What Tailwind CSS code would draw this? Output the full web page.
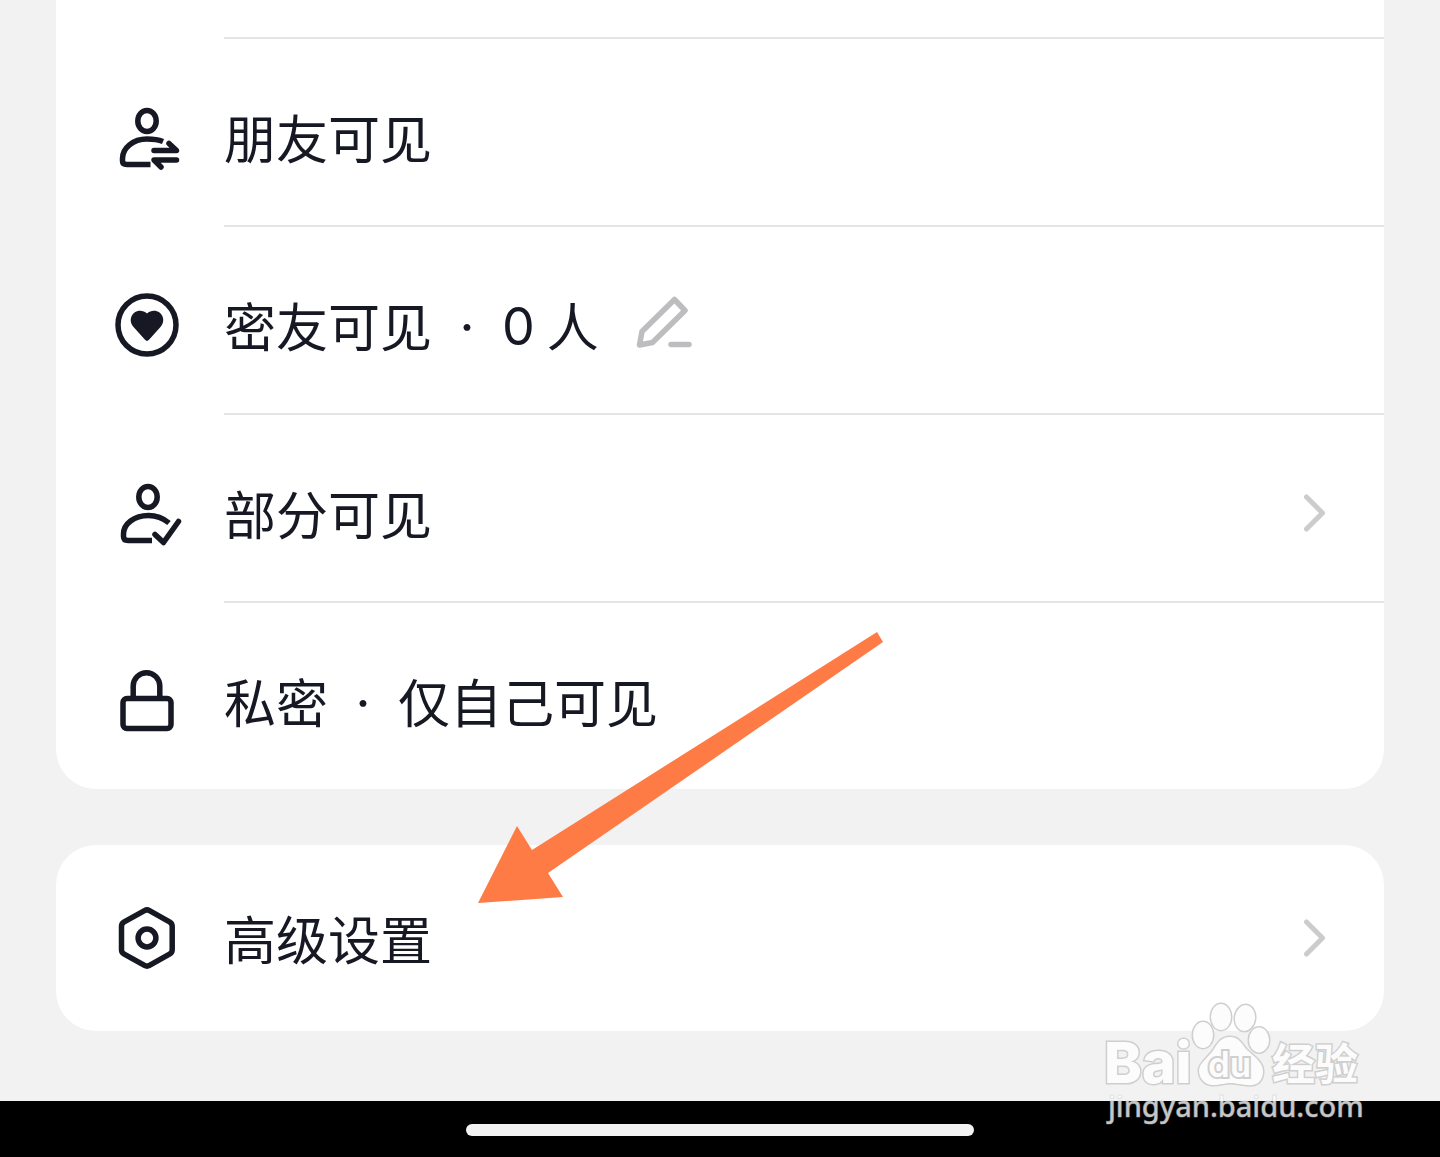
<!DOCTYPE html>
<html lang="zh-CN">
  <head>
    <meta charset="UTF-8" />
    <meta name="viewport" content="width=device-width, initial-scale=1.0" />
    <title>谁可以看</title>
    <script src="https://cdn.jsdelivr.net/npm/@tailwindcss/browser@4"></script>
  </head>
  <body class="relative flex min-h-screen flex-col overflow-x-hidden bg-[#f2f2f2] font-['Inter','Noto_Sans_CJK_SC',sans-serif] text-[52px] leading-[60px] text-[#161823]">
    <main class="flex flex-col gap-14 px-14 pb-[70px]">
      <!-- Visibility options -->
      <section class="rounded-b-[40px] bg-white">
        <div class="ml-42 h-[39px] border-b-2 border-[#e5e5e6]"></div>

        <button type="button" class="flex w-full text-left">
          <span class="flex w-42 items-center pt-2.5 pl-15">
            <svg class="size-16 overflow-visible" viewBox="0 0 64 64" fill="none" stroke="currentColor" stroke-width="5.500" stroke-linecap="round" stroke-linejoin="round" aria-hidden="true">
              <ellipse cx="31" cy="15" rx="9.2" ry="10.6" />
              <path stroke-linecap="butt" d="M47 35.500C42 33.500 37 33 31 33 17 33 6.500 42 6.500 52.500V55Q6.500 58.500 11 58.500H34.500" />
              <path d="M38 44.500H60.500L53 37.500M60.500 54H38L45 61" />
            </svg>
          </span>
          <span class="flex h-[188px] flex-1 items-center border-b-2 border-[#e5e5e6] pt-2.5"><span class="pt-2">朋友可见</span></span>
        </button>

        <div class="flex w-full">
          <span class="flex w-42 items-center pt-2.5 pl-15">
            <svg class="size-16 overflow-visible" viewBox="0 0 64 64" fill="none" stroke="currentColor" stroke-width="5.500" aria-hidden="true">
              <circle cx="31" cy="31" r="29" />
              <path fill="currentColor" stroke="none" d="M31 19.500C27.500 16 22 15.800 18.500 18.500 13.800 22.200 13.600 28.500 17.300 32.800L29 45.800Q31 48 33 45.800L44.700 32.800C48.400 28.500 48.200 22.200 43.500 18.500 40 15.800 34.500 16 31 19.500Z" />
            </svg>
          </span>
          <div class="flex h-[188px] flex-1 items-center border-b-2 border-[#e5e5e6] pt-2.5">
            <button type="button" class="flex items-center"><span class="pt-2">密友可见</span><span class="w-[70px] pt-1 text-center">·</span><span class="pt-1">0</span><span class="ml-3 pt-2">人</span></button>
            <button type="button" class="ml-9 text-[#bdbdbf]" aria-label="编辑密友">
              <svg class="size-14 overflow-visible" viewBox="0 0 56 56" fill="none" stroke="currentColor" stroke-width="5.500" stroke-linecap="round" stroke-linejoin="round">
                <path d="M39.500 2.500L50 13.500 17.500 45.500 4.500 48 7 34.500ZM36 47.500H54" />
              </svg>
            </button>
          </div>
        </div>

        <button type="button" class="flex w-full text-left">
          <span class="flex w-42 items-center pt-2.5 pl-15">
            <svg class="size-16 overflow-visible" viewBox="0 0 64 64" fill="none" stroke="currentColor" stroke-width="5.500" stroke-linecap="round" stroke-linejoin="round" aria-hidden="true">
              <ellipse cx="32" cy="15" rx="9.200" ry="10.600" />
              <path stroke-linecap="butt" d="M53 41C47 36 40 33.500 32.500 33.500 18 33.500 7.500 42 7.500 52V54.500Q7.500 58.500 12 58.500H36" />
              <path d="M39 52.500L47.500 60.500 62.500 39.500" />
            </svg>
          </span>
          <span class="flex h-[188px] flex-1 items-center justify-between border-b-2 border-[#e5e5e6] pt-2.5 pr-14">
            <span class="pt-2">部分可见</span>
            <svg class="h-10 w-6" viewBox="0 0 24 40" fill="none" stroke="#cccccc" stroke-width="5" stroke-linecap="round" stroke-linejoin="round" aria-hidden="true"><path d="M2.500 4L18.500 20 2.500 36" /></svg>
          </span>
        </button>

        <button type="button" class="flex w-full text-left">
          <span class="flex w-42 items-center pt-2.5 pl-15">
            <svg class="size-16 overflow-visible" viewBox="0 0 64 64" fill="none" stroke="currentColor" stroke-width="5.500" aria-hidden="true">
              <rect x="7" y="29.500" width="48" height="30" rx="4" />
              <path d="M17.200 29V17a13.300 13.300 0 0 1 26.600 0V29" />
            </svg>
          </span>
          <span class="flex h-[186px] flex-1 items-center pt-2.5"><span class="pt-2">私密</span><span class="w-[70px] pt-1 text-center">·</span><span class="pt-2">仅自己可见</span></span>
        </button>
      </section>

      <!-- Advanced settings -->
      <section class="rounded-[40px] bg-white">
        <button type="button" class="flex w-full text-left">
          <span class="flex w-42 items-center pl-15">
            <svg class="size-16 overflow-visible" viewBox="0 0 64 64" fill="none" stroke="currentColor" stroke-width="5.500" stroke-linejoin="round" aria-hidden="true">
              <path d="M28.500 4.600Q31 3.200 33.500 4.600L53.500 15.800Q56.200 17.300 56.200 20.300V43.700Q56.200 46.700 53.500 48.200L33.500 59.400Q31 60.800 28.500 59.400L8.200 48.200Q5.500 46.700 5.500 43.700V20.300Q5.500 17.300 8.200 15.800Z" />
              <circle cx="31" cy="32" r="8.900" />
            </svg>
          </span>
          <span class="flex h-[186px] flex-1 items-center justify-between pr-14">
            <span class="pt-2">高级设置</span>
            <svg class="h-10 w-6" viewBox="0 0 24 40" fill="none" stroke="#cccccc" stroke-width="5" stroke-linecap="round" stroke-linejoin="round" aria-hidden="true"><path d="M2.500 4L18.500 20 2.500 36" /></svg>
          </span>
        </button>
      </section>
    </main>

    <!-- Home indicator -->
    <footer class="mt-auto flex h-14 items-center justify-center bg-black">
      <div class="mt-0.5 h-3 w-[508px] rounded-full bg-[#f2f2f2]"></div>
    </footer>

    <!-- Pointer arrow -->
    <svg class="pointer-events-none absolute top-[632px] left-[478px] h-[271px] w-[405px]" viewBox="0 0 405 271" fill="#ff7b45" aria-hidden="true">
      <path d="M0 271L39 194 54 218 399 0 405 10 70 241 85 265Z" />
    </svg>

    <!-- Watermark -->
    <svg class="pointer-events-none absolute right-[70px] bottom-[17px] h-[150px] w-[280px]" viewBox="0 0 280 150" aria-label="Baidu 经验">
      <g fill="#fcfcfc" stroke="#cfcfcf" stroke-width="3" paint-order="stroke">
        <text x="14" y="93" font-family="Inter" font-weight="800" font-size="57">Bai</text>
        <text x="182" y="90" font-family="Noto Sans CJK SC" font-weight="700" font-size="43">经验</text>
        <ellipse cx="113" cy="45" rx="10" ry="13" />
        <ellipse cx="131" cy="27" rx="10" ry="13" />
        <ellipse cx="155" cy="28" rx="10" ry="13" transform="rotate(8 155 28)" />
        <ellipse cx="169" cy="50" rx="10" ry="12.500" />
        <path d="M140 47C149 47 152 54 156 59 163 66 174 72 173 83 172 93 165 96 157 95 148 94 144 93 140 93 135 93 131 95 123 95 114 95 109 88 109 80 110 72 118 68 124 59 128 53 131 47 140 47Z" />
        <text x="118" y="87" font-family="Inter" font-weight="600" font-size="35" stroke-width="4">du</text>
      </g>
      <text x="18" y="127" font-family="Noto Sans" font-weight="500" font-size="29" fill="#ffffff" fill-opacity=".78" stroke="#bdbdbd" stroke-opacity=".4" stroke-width="1">jingyan.baidu.com</text>
    </svg>
  </body>
</html>
